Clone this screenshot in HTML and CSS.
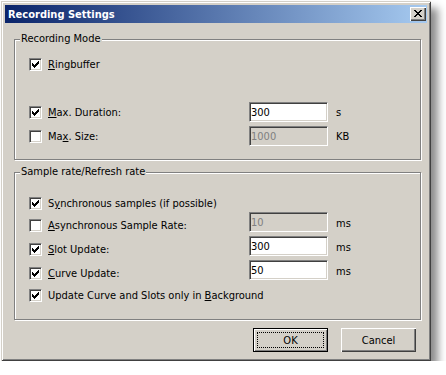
FILE: index.html
```html
<!DOCTYPE html>
<html lang="en">
<head>
    <meta charset="UTF-8">
    <title>Recording Settings</title>
    <link rel="stylesheet" href="styles.css">
</head>
<body>
    <div class="dialog">
        <div class="titlebar">
            <span class="title">Recording Settings</span>
            <span class="caption-btn">
                <svg width="8" height="7" viewBox="0 0 8 7"><path d="M0 0h2v1h-2zM6 0h2v1h-2zM1 1h2v1h-2zM5 1h2v1h-2zM2 2h4v1h-4zM3 3h2v1h-2zM2 4h4v1h-4zM1 5h2v1h-2zM5 5h2v1h-2zM0 6h2v1h-2zM6 6h2v1h-2z"/></svg>
            </span>
        </div>
        <div class="client">
            <div class="group group-mode">
                <div class="group-title">Recording Mode</div>
                <div class="row row-ring">
                    <label class="check">
                        <span class="box"><svg width="7" height="7" viewBox="0 0 7 7"><path d="M0 2h1v1h1v1h1v-1h1v-1h1v-1h1v-1h1v3h-1v1h-1v1h-1v1h-1v1h-1v-1h-1v-1h-1z"/></svg></span>
                        <span><u>R</u>ingbuffer</span>
                    </label>
                </div>
                <div class="row row-field row-duration">
                    <label class="check">
                        <span class="box"><svg width="7" height="7" viewBox="0 0 7 7"><path d="M0 2h1v1h1v1h1v-1h1v-1h1v-1h1v-1h1v3h-1v1h-1v1h-1v1h-1v1h-1v-1h-1v-1h-1z"/></svg></span>
                        <span><u>M</u>ax. Duration:</span>
                    </label>
                    <input class="edit" type="text" value="300">
                    <span class="unit">s</span>
                </div>
                <div class="row row-field">
                    <label class="check">
                        <span class="box"></span>
                        <span>Ma<u>x</u>. Size:</span>
                    </label>
                    <input class="edit" type="text" value="1000" disabled>
                    <span class="unit">KB</span>
                </div>
            </div>

            <div class="group group-rate">
                <div class="group-title">Sample rate/Refresh rate</div>
                <div class="row row-sync">
                    <label class="check">
                        <span class="box"><svg width="7" height="7" viewBox="0 0 7 7"><path d="M0 2h1v1h1v1h1v-1h1v-1h1v-1h1v-1h1v3h-1v1h-1v1h-1v1h-1v1h-1v-1h-1v-1h-1z"/></svg></span>
                        <span>S<u>y</u>nchronous samples (if possible)</span>
                    </label>
                </div>
                <div class="row row-field">
                    <label class="check">
                        <span class="box"></span>
                        <span><u>A</u>synchronous Sample Rate:</span>
                    </label>
                    <input class="edit" type="text" value="10" disabled>
                    <span class="unit">ms</span>
                </div>
                <div class="row row-field">
                    <label class="check">
                        <span class="box"><svg width="7" height="7" viewBox="0 0 7 7"><path d="M0 2h1v1h1v1h1v-1h1v-1h1v-1h1v-1h1v3h-1v1h-1v1h-1v1h-1v1h-1v-1h-1v-1h-1z"/></svg></span>
                        <span><u>S</u>lot Update:</span>
                    </label>
                    <input class="edit" type="text" value="300">
                    <span class="unit">ms</span>
                </div>
                <div class="row row-field">
                    <label class="check">
                        <span class="box"><svg width="7" height="7" viewBox="0 0 7 7"><path d="M0 2h1v1h1v1h1v-1h1v-1h1v-1h1v-1h1v3h-1v1h-1v1h-1v1h-1v1h-1v-1h-1v-1h-1z"/></svg></span>
                        <span><u>C</u>urve Update:</span>
                    </label>
                    <input class="edit" type="text" value="50">
                    <span class="unit">ms</span>
                </div>
                <div class="row row-bg">
                    <label class="check">
                        <span class="box"><svg width="7" height="7" viewBox="0 0 7 7"><path d="M0 2h1v1h1v1h1v-1h1v-1h1v-1h1v-1h1v3h-1v1h-1v1h-1v1h-1v1h-1v-1h-1v-1h-1z"/></svg></span>
                        <span>Update Curve and Slots only in <u>B</u>ackground</span>
                    </label>
                </div>
            </div>

            <div class="buttons">
                <button class="btn btn-default"><span class="focus">OK</span></button>
                <button class="btn"><span class="focus-off">Cancel</span></button>
            </div>
        </div>
    </div>
</body>
</html>
```

FILE: styles.css
```css
* {
    box-sizing: border-box;
}

body {
    margin: 0;
    background: #fff;
    font-family: "DejaVu Sans Condensed", "Liberation Sans", Arial, sans-serif;
    font-size: 11px;
    color: #000;
}

.dialog {
    width: 430px;
    height: 360px;
    margin: 1px 0 0 1px;
    padding: 4px;
    background: #d4d0c8;
    box-shadow:
        inset 1px 1px 0 #d4d0c8,
        inset -1px -1px 0 #404040,
        inset 2px 2px 0 #fff,
        inset -2px -2px 0 #808080,
        7px 7px 8px rgba(0, 0, 0, 0.45);
}

/* caption */
.titlebar {
    height: 18px;
    display: flex;
    align-items: center;
    justify-content: space-between;
    padding: 0 1px 0 3px;
    background: linear-gradient(to right, #0a246a, #a6caf0);
    color: #fff;
    font-weight: bold;
}

.caption-btn {
    width: 16px;
    height: 14px;
    padding: 3px 0 0 4px;
    background: #d4d0c8;
    box-shadow:
        inset 1px 1px 0 #fff,
        inset -1px -1px 0 #404040,
        inset -2px -2px 0 #808080;
}

.caption-btn svg {
    display: block;
    shape-rendering: crispEdges;
}

.client {
    padding: 16px 0 0 9px;
}

/* etched group boxes */
.group {
    width: 407px;
    border: 1px solid #808080;
    box-shadow: 1px 1px 0 #fff, inset 1px 1px 0 #fff;
}

.group-title {
    width: max-content;
    margin: -8px 0 0 5px;
    padding: 0 1px;
    line-height: 13px;
    background: #d4d0c8;
}

.group-mode {
    padding-bottom: 11px;
}

.group-rate {
    margin-top: 12px;
    padding-bottom: 17px;
}

.row {
    display: flex;
    align-items: flex-start;
    padding-left: 14px;
}

.row-ring {
    margin-top: 13px;
}

.row-duration {
    margin-top: 29px;
}

.row-sync {
    margin-top: 19px;
}

.row-bg {
    margin-top: 7px;
}

.row-field {
    height: 24px;
}

.check {
    display: flex;
    align-items: center;
    height: 13px;
    line-height: 13px;
    white-space: nowrap;
}

.row-field .check {
    width: 220px;
    margin-top: 6px;
}

.box {
    flex: none;
    width: 13px;
    height: 13px;
    margin-right: 6px;
    padding: 1px;
    background: #fff;
    border: 1px solid;
    border-color: #808080 #fff #fff #808080;
    box-shadow: inset 1px 1px 0 #404040, inset -1px -1px 0 #d4d0c8;
}

.box svg {
    display: block;
    margin: 1px;
    shape-rendering: crispEdges;
}

.edit {
    width: 79px;
    height: 20px;
    margin: 2px 0 0 0;
    padding: 0 0 0 1px;
    font: inherit;
    color: #000;
    background: #fff;
    border: 1px solid;
    border-color: #808080 #fff #fff #808080;
    box-shadow: inset 1px 1px 0 #404040, inset -1px -1px 0 #d4d0c8;
    outline: none;
}

.edit:disabled {
    background: #d4d0c8;
    color: #808080;
    -webkit-text-fill-color: #808080;
}

.unit {
    margin: 6px 0 0 8px;
    line-height: 13px;
}

.group-rate .row-field .check {
    margin-top: 9px;
}

.group-rate .unit {
    margin-top: 7px;
}

/* push buttons */
.buttons {
    display: flex;
    justify-content: flex-end;
    gap: 13px;
    margin-top: 8px;
    padding-right: 11px;
}

.btn {
    width: 75px;
    height: 24px;
    padding: 3px;
    font: inherit;
    color: #000;
    background: #d4d0c8;
    border: none;
    box-shadow:
        inset 1px 1px 0 #fff,
        inset -1px -1px 0 #404040,
        inset -2px -2px 0 #808080;
}

.btn-default {
    border: 1px solid #000;
    box-shadow:
        inset 1px 1px 0 #fff,
        inset -1px -1px 0 #808080;
}

.focus,
.focus-off {
    display: flex;
    align-items: center;
    justify-content: center;
    height: 100%;
    border: 1px dotted transparent;
}

.focus {
    border-color: #000;
}
```
